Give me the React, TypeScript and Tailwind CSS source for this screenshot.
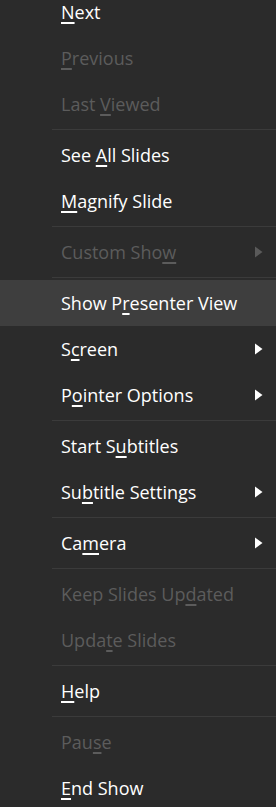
import React from "react";

type Item = {
  label: string;
  key?: number; // index of underlined letter
  disabled?: boolean;
  sub?: boolean;
  active?: boolean;
  sep?: boolean;
};

const items: Item[] = [
  { label: "Next", key: 0 },
  { label: "Previous", key: 0, disabled: true },
  { label: "Last Viewed", key: 5, disabled: true },
  { sep: true, label: "" },
  { label: "See All Slides", key: 4 },
  { label: "Magnify Slide", key: 0 },
  { sep: true, label: "" },
  { label: "Custom Show", key: 10, disabled: true, sub: true },
  { sep: true, label: "" },
  { label: "Show Presenter View", key: 6, active: true },
  { label: "Screen", key: 1, sub: true },
  { label: "Pointer Options", key: 1, sub: true },
  { sep: true, label: "" },
  { label: "Start Subtitles", key: 7 },
  { label: "Subtitle Settings", key: 2, sub: true },
  { sep: true, label: "" },
  { label: "Camera", key: 2, sub: true },
  { sep: true, label: "" },
  { label: "Keep Slides Updated", key: 14, disabled: true },
  { label: "Update Slides", key: 4, disabled: true },
  { sep: true, label: "" },
  { label: "Help", key: 0 },
  { sep: true, label: "" },
  { label: "Pause", key: 3, disabled: true },
  { label: "End Show", key: 0 },
];

function Arrow({ disabled }: { disabled?: boolean }) {
  return (
    <svg width="9" height="12" viewBox="0 0 9 12" className="mr-[13px]">
      <path d="M1 0.5 L8.5 6 L1 11.5 Z" fill={disabled ? "#5a5a5a" : "#ffffff"} />
    </svg>
  );
}

function Row({ item }: { item: Item }) {
  const k = item.key ?? -1;
  const before = item.label.slice(0, k);
  const letter = item.label.slice(k, k + 1);
  const after = item.label.slice(k + 1);
  return (
    <div
      className={`h-[46px] flex items-center justify-between pl-[61px] ${
        item.active ? "bg-[#3e3e3e]" : ""
      } ${item.disabled ? "text-[#5c5c5c]" : "text-white"}`}
    >
      <span className="text-[18px] font-medium whitespace-nowrap">
        {before}
        <u className="underline underline-offset-[3px] decoration-[1.5px]">{letter}</u>
        {after}
      </span>
      {item.sub && <Arrow disabled={item.disabled} />}
    </div>
  );
}

export default function App() {
  return (
    <div
      className="w-[276px] h-[807px] overflow-hidden bg-[#2b2b2b]"
      style={{ fontFamily: '"Open Sans", "Noto Sans", sans-serif' }}
    >
      <div className="-mt-[11px]">
        {items.map((it, i) =>
          it.sep ? (
            <div key={i} className="my-[2px] ml-[52px] h-px bg-[#3b3b3b]" />
          ) : (
            <Row key={i} item={it} />
          )
        )}
      </div>
    </div>
  );
}
